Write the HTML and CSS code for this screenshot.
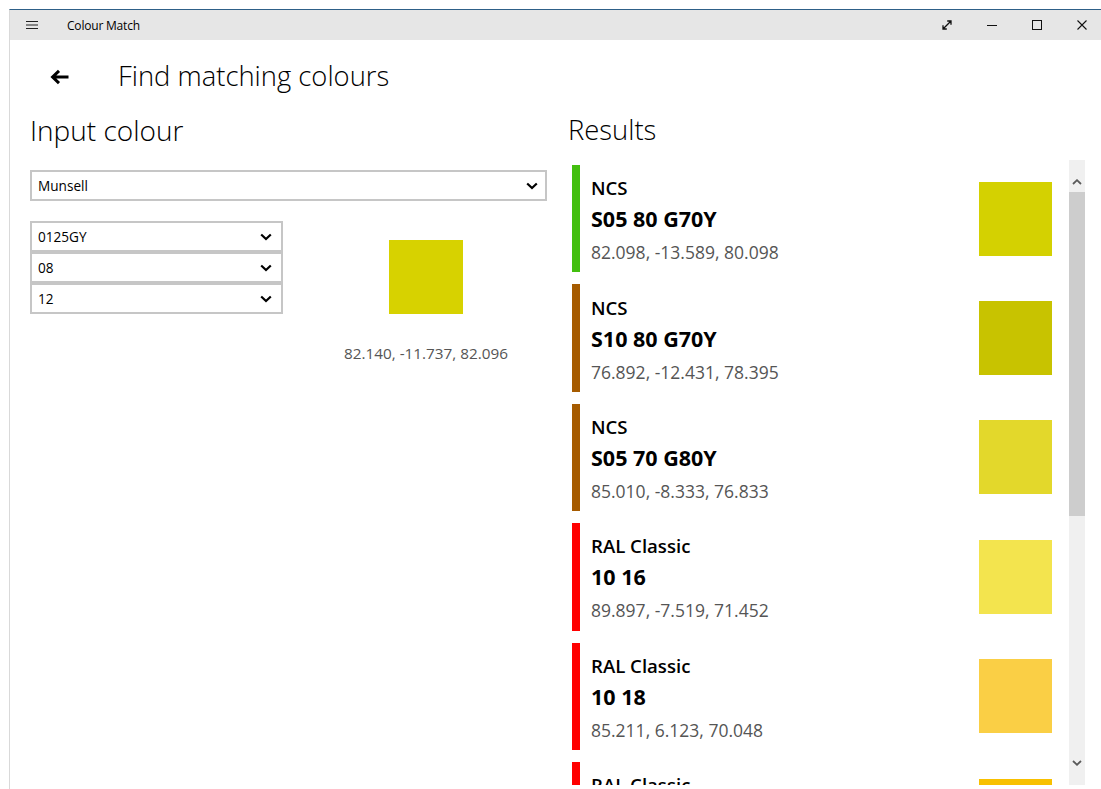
FILE: index.html
```html
<!DOCTYPE html>
<html lang="en">
<head>
<meta charset="utf-8">
<title>Colour Match</title>
<link rel="stylesheet" href="styles.css">
</head>
<body>
<div class="window">
  <div class="titlebar">
    <div class="tb-menu">
      <svg width="12" height="10" viewBox="0 0 12 10"><path d="M0 1.5H12M0 5H12M0 8.5H12" stroke="#222" stroke-width="1.1" fill="none"/></svg>
    </div>
    <div class="tb-title">Colour Match</div>
    <div class="tb-buttons">
      <div class="tb-btn"><svg width="10" height="10" viewBox="0 0 10 10"><path d="M1 9L9 1M5.2 1H9V4.8M1 5.2V9H4.8" stroke="#111" stroke-width="1.3" fill="none"/></svg></div>
      <div class="tb-btn"><svg width="10" height="10" viewBox="0 0 10 10"><path d="M0 5.5H10" stroke="#111" stroke-width="1" fill="none"/></svg></div>
      <div class="tb-btn"><svg width="10" height="10" viewBox="0 0 10 10"><rect x="0.5" y="0.5" width="9" height="9" stroke="#111" stroke-width="1" fill="none"/></svg></div>
      <div class="tb-btn"><svg width="10" height="10" viewBox="0 0 10 10"><path d="M0.5 0.5L9.5 9.5M9.5 0.5L0.5 9.5" stroke="#111" stroke-width="1.1" fill="none"/></svg></div>
    </div>
  </div>

  <div class="page">
    <div class="page-header">
      <div class="back-btn">
        <svg width="20" height="16" viewBox="0 0 20 16"><path d="M18.5 8H3M9 1.8L2.6 8L9 14.2" stroke="#000" stroke-width="3" fill="none" stroke-linejoin="miter"/></svg>
      </div>
      <h1 class="page-title">Find matching colours</h1>
    </div>

    <div class="columns">
      <section class="input-pane">
        <h2 class="pane-title">Input colour</h2>
        <div class="combo combo-wide">
          <span>Munsell</span>
          <svg class="chev" width="12" height="8" viewBox="0 0 12 8"><path d="M1.2 1.5L6 6L10.8 1.5" stroke="#000" stroke-width="2.2" fill="none"/></svg>
        </div>
        <div class="input-row">
          <div class="combo-stack">
            <div class="combo">
              <span>0125GY</span>
              <svg class="chev" width="12" height="8" viewBox="0 0 12 8"><path d="M1.2 1.5L6 6L10.8 1.5" stroke="#000" stroke-width="2.2" fill="none"/></svg>
            </div>
            <div class="combo">
              <span>08</span>
              <svg class="chev" width="12" height="8" viewBox="0 0 12 8"><path d="M1.2 1.5L6 6L10.8 1.5" stroke="#000" stroke-width="2.2" fill="none"/></svg>
            </div>
            <div class="combo">
              <span>12</span>
              <svg class="chev" width="12" height="8" viewBox="0 0 12 8"><path d="M1.2 1.5L6 6L10.8 1.5" stroke="#000" stroke-width="2.2" fill="none"/></svg>
            </div>
          </div>
          <div class="input-preview">
            <div class="preview-swatch"></div>
            <div class="preview-lab">82.140, -11.737, 82.096</div>
          </div>
        </div>
      </section>

      <section class="results-pane">
        <h2 class="pane-title">Results</h2>
        <div class="results-frame">
          <div class="results-list">
            <div class="result">
              <div class="result-bar" style="background:#43bf0f"></div>
              <div class="result-text">
                <div class="result-system">NCS</div>
                <div class="result-code">S05 80 G70Y</div>
                <div class="result-lab">82.098, -13.589, 80.098</div>
              </div>
              <div class="result-swatch" style="background:#d4d101"></div>
            </div>
            <div class="result">
              <div class="result-bar" style="background:#a65b00"></div>
              <div class="result-text">
                <div class="result-system">NCS</div>
                <div class="result-code">S10 80 G70Y</div>
                <div class="result-lab">76.892, -12.431, 78.395</div>
              </div>
              <div class="result-swatch" style="background:#c8c300"></div>
            </div>
            <div class="result">
              <div class="result-bar" style="background:#a65b00"></div>
              <div class="result-text">
                <div class="result-system">NCS</div>
                <div class="result-code">S05 70 G80Y</div>
                <div class="result-lab">85.010, -8.333, 76.833</div>
              </div>
              <div class="result-swatch" style="background:#e3d82b"></div>
            </div>
            <div class="result">
              <div class="result-bar" style="background:#ff0000"></div>
              <div class="result-text">
                <div class="result-system">RAL Classic</div>
                <div class="result-code">10 16</div>
                <div class="result-lab">89.897, -7.519, 71.452</div>
              </div>
              <div class="result-swatch" style="background:#f3e44e"></div>
            </div>
            <div class="result">
              <div class="result-bar" style="background:#ff0000"></div>
              <div class="result-text">
                <div class="result-system">RAL Classic</div>
                <div class="result-code">10 18</div>
                <div class="result-lab">85.211, 6.123, 70.048</div>
              </div>
              <div class="result-swatch" style="background:#facf45"></div>
            </div>
            <div class="result">
              <div class="result-bar" style="background:#ff0000"></div>
              <div class="result-text">
                <div class="result-system">RAL Classic</div>
                <div class="result-code">10 21</div>
                <div class="result-lab">87.317, 7.040, 85.774</div>
              </div>
              <div class="result-swatch" style="background:#f8c000"></div>
            </div>
          </div>
          <div class="scrollbar">
            <div class="sb-arrow sb-up">
              <svg width="10" height="6" viewBox="0 0 10 6"><path d="M1 5L5 1.2L9 5" stroke="#5a5a5a" stroke-width="1.8" fill="none"/></svg>
            </div>
            <div class="sb-thumb"></div>
            <div class="sb-track"></div>
            <div class="sb-arrow sb-down">
              <svg width="10" height="6" viewBox="0 0 10 6"><path d="M1 1L5 4.8L9 1" stroke="#5a5a5a" stroke-width="1.8" fill="none"/></svg>
            </div>
          </div>
        </div>
      </section>
    </div>
  </div>
</div>
</body>
</html>
```

FILE: styles.css
```css
html, body {
  margin: 0;
  padding: 0;
  background: #ffffff;
  overflow: hidden;
}

body {
  font-family: "Open Sans", "Noto Sans", sans-serif;
  color: #000;
}

.window {
  margin: 9px 0 0 9px;
  width: 1094px;
  height: 780px;
  border-top: 1px solid #2e6088;
  border-left: 1px solid #d9d9d9;
  background: #fff;
  display: flex;
  flex-direction: column;
  overflow: hidden;
}

/* title bar */
.titlebar {
  height: 30px;
  background: #e6e6e6;
  display: flex;
  align-items: center;
  flex-shrink: 0;
}

.tb-menu {
  width: 44px;
  height: 30px;
  display: flex;
  align-items: center;
  justify-content: center;
}

.tb-title {
  font-size: 12px;
  margin-left: 13px;
  letter-spacing: -0.2px;
}

.tb-buttons {
  margin-left: auto;
  display: flex;
}

.tb-btn {
  width: 45px;
  height: 30px;
  display: flex;
  align-items: center;
  justify-content: center;
}

/* page */
.page {
  flex: 1;
  display: flex;
  flex-direction: column;
  min-height: 0;
}

.page-header {
  height: 72px;
  display: flex;
  align-items: center;
  flex-shrink: 0;
}

.back-btn {
  width: 60px;
  margin-left: 20px;
  display: flex;
  justify-content: center;
  align-items: center;
  padding-top: 2px;
}

.page-title {
  margin: 0 0 0 28px;
  font-size: 27.4px;
  font-weight: 300;
  line-height: 36px;
}

.columns {
  flex: 1;
  display: grid;
  grid-template-columns: 517px 517px;
  column-gap: 21px;
  padding-left: 20px;
  min-height: 0;
}

.pane-title {
  margin: -2px 0 0 0;
  font-size: 28px;
  font-weight: 300;
  line-height: 40px;
}

.results-pane .pane-title {
  font-size: 27.4px;
}

/* input side */
.input-pane {
  display: flex;
  flex-direction: column;
}

.combo {
  box-sizing: border-box;
  height: 31px;
  border: 2px solid #c6c6c6;
  display: flex;
  align-items: center;
  padding: 0 9px 0 6px;
  font-size: 13.6px;
}

.combo span {
  flex: 1;
}

.combo-wide {
  margin-top: 20px;
  padding-right: 7px;
}

.input-row {
  display: flex;
  margin-top: 20px;
}

.combo-stack {
  width: 253px;
  display: flex;
  flex-direction: column;
}

.input-preview {
  flex: 1;
  margin-left: 22px;
  display: flex;
  flex-direction: column;
  align-items: center;
  padding-top: 19px;
}

.preview-swatch {
  width: 74px;
  height: 74px;
  background: #d7d200;
}

.preview-lab {
  margin-top: 29px;
  font-size: 15.3px;
  line-height: 20px;
  color: #555;
}

/* results side */
.results-pane {
  display: flex;
  flex-direction: column;
  min-height: 0;
}

.results-frame {
  margin-top: 10px;
  height: 625px;
  display: flex;
  overflow: hidden;
}

.results-list {
  flex: 1;
  padding: 5px 17px 0 4px;
  display: flex;
  flex-direction: column;
  gap: 12px;
  overflow: hidden;
}

.result {
  height: 107.4px;
  display: flex;
  align-items: center;
  flex-shrink: 0;
}

.result-bar {
  width: 8px;
  align-self: stretch;
}

.result-text {
  flex: 1;
  padding-left: 11px;
  padding-top: 5px;
}

.result-system {
  font-size: 18.6px;
  font-weight: 600;
  line-height: 30px;
}

.result-code {
  font-size: 21.5px;
  font-weight: 700;
  line-height: 32px;
}

.result-lab {
  font-size: 17.5px;
  line-height: 34px;
  color: #555;
}

.result-swatch {
  width: 73px;
  height: 74px;
}

/* scroll bar */
.scrollbar {
  width: 16px;
  background: #f0f0f0;
  display: flex;
  flex-direction: column;
}

.sb-arrow {
  height: 32px;
  box-sizing: border-box;
  display: flex;
  align-items: center;
  justify-content: center;
}

.sb-up {
  padding-top: 12px;
}

.sb-down {
  padding-bottom: 12px;
}

.sb-thumb {
  height: 324px;
  background: #cdcdcd;
}

.sb-track {
  flex: 1;
}
```
